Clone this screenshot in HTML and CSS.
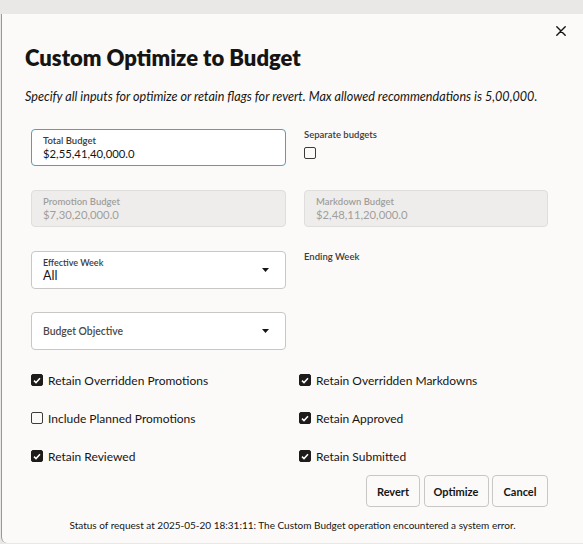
FILE: index.html
```html
<!DOCTYPE html>
<html lang="en">
<head>
<meta charset="utf-8">
<title>Custom Optimize to Budget</title>
<link rel="stylesheet" href="styles.css">
</head>
<body>
<div class="dialog">
  <div class="dlg-head">
    <button class="close" aria-label="Close">
      <svg width="10" height="10" viewBox="0 0 10 10"><path d="M0.8 0.8L9.2 9.2M9.2 0.8L0.8 9.2" stroke="#161513" stroke-width="1.4" stroke-linecap="round"/></svg>
    </button>
  </div>
  <h1 class="title">Custom Optimize to Budget</h1>
  <p class="subtitle">Specify all inputs for optimize or retain flags for revert. Max allowed recommendations is 5,00,000.</p>

  <div class="form">
    <div class="row">
      <div class="field focused">
        <span class="flabel">Total Budget</span>
        <span class="fvalue">$2,55,41,40,000.0</span>
      </div>
      <div class="side">
        <span class="slabel">Separate budgets</span>
        <span class="cb"></span>
      </div>
    </div>

    <div class="row">
      <div class="field disabled">
        <span class="flabel">Promotion Budget</span>
        <span class="fvalue">$7,30,20,000.0</span>
      </div>
      <div class="field disabled">
        <span class="flabel">Markdown Budget</span>
        <span class="fvalue">$2,48,11,20,000.0</span>
      </div>
    </div>

    <div class="row row-tight">
      <div class="field select">
        <div class="ftext">
          <span class="flabel small">Effective Week</span>
          <span class="fvalue big">All</span>
        </div>
        <svg class="caret" width="7" height="4" viewBox="0 0 7 4"><path d="M0 0H7L3.5 4Z" fill="#161513"/></svg>
      </div>
      <div class="side">
        <span class="slabel">Ending Week</span>
      </div>
    </div>

    <div class="row">
      <div class="field select">
        <span class="placeholder">Budget Objective</span>
        <svg class="caret" width="7" height="4" viewBox="0 0 7 4"><path d="M0 0H7L3.5 4Z" fill="#161513"/></svg>
      </div>
    </div>

    <div class="checks">
      <label class="check"><span class="cb on"><svg width="8" height="7" viewBox="0 0 8 7"><path d="M1 3.6L3 5.6L7 1.2" stroke="#fff" stroke-width="1.5" fill="none"/></svg></span>Retain Overridden Promotions</label>
      <label class="check"><span class="cb on"><svg width="8" height="7" viewBox="0 0 8 7"><path d="M1 3.6L3 5.6L7 1.2" stroke="#fff" stroke-width="1.5" fill="none"/></svg></span>Retain Overridden Markdowns</label>
      <label class="check"><span class="cb"></span>Include Planned Promotions</label>
      <label class="check"><span class="cb on"><svg width="8" height="7" viewBox="0 0 8 7"><path d="M1 3.6L3 5.6L7 1.2" stroke="#fff" stroke-width="1.5" fill="none"/></svg></span>Retain Approved</label>
      <label class="check"><span class="cb on"><svg width="8" height="7" viewBox="0 0 8 7"><path d="M1 3.6L3 5.6L7 1.2" stroke="#fff" stroke-width="1.5" fill="none"/></svg></span>Retain Reviewed</label>
      <label class="check"><span class="cb on"><svg width="8" height="7" viewBox="0 0 8 7"><path d="M1 3.6L3 5.6L7 1.2" stroke="#fff" stroke-width="1.5" fill="none"/></svg></span>Retain Submitted</label>
    </div>

    <div class="buttons">
      <button class="btn btn-revert">Revert</button>
      <button class="btn btn-opt">Optimize</button>
      <button class="btn btn-cancel">Cancel</button>
    </div>
  </div>
  <p class="status">Status of request at 2025-05-20 18:31:11: The Custom Budget operation encountered a system error.</p>
</div>
</body>
</html>
```

FILE: styles.css
```css
* { box-sizing: border-box; }

html, body {
  margin: 0;
  height: 544px;
  overflow: hidden;
}

body {
  background: #e9e8e6;
  font-family: Lato, "Noto Sans", "Liberation Sans", sans-serif;
  color: #161513;
}

.dialog {
  margin: 14px 0 0 1px;
  height: 529px;
  background: #fcfaf9;
  border-left: 1px solid #9b9997;
  border-radius: 0 0 0 6px;
  padding: 0 0 0 23px;
  display: flex;
  flex-direction: column;
}

.dlg-head {
  display: flex;
  justify-content: flex-end;
  padding: 12px 17px 0 0;
  height: 22px;
}

.close {
  border: 0;
  background: none;
  padding: 0;
  width: 10px;
  height: 10px;
  display: block;
}
.close svg { display: block; }

.title {
  margin: 8px 0 0;
  font-size: 22px;
  line-height: 27px;
  font-weight: 800;
}

.subtitle {
  margin: 18px 0 0;
  font-size: 12.6px;
  line-height: 16px;
  font-style: italic;
}

.form {
  margin: 24px 0 0 6px;
  width: 517px;
  display: flex;
  flex-direction: column;
}

.row {
  display: grid;
  grid-template-columns: 255px 244px;
  column-gap: 18px;
  margin-bottom: 24px;
  align-items: start;
}
.row.row-tight { margin-bottom: 23px; }

.field {
  height: 37px;
  border: 1px solid #c9c7c5;
  border-radius: 4px;
  background: #fff;
  padding: 5px 11px 0;
  display: flex;
  flex-direction: column;
}

.field.focused {
  border: 1.5px solid #5f9cb0;
  padding-top: 4.5px;
}

.field.disabled {
  background: #efedeb;
  border-color: #e0dedc;
}

.flabel {
  font-size: 9.5px;
  line-height: 12px;
  font-weight: 600;
  color: #3c3b39;
}
.flabel.small { font-size: 9px; }

.fvalue {
  font-size: 11.3px;
  line-height: 14px;
  color: #161513;
}
.fvalue.big { font-size: 12.5px; }

.disabled .flabel,
.disabled .fvalue { color: #a09e9c; }

.field.select {
  height: 38px;
  flex-direction: row;
  align-items: center;
  justify-content: space-between;
  padding: 0 16px 0 11px;
}

.ftext {
  display: flex;
  flex-direction: column;
  padding-bottom: 1px;
}

.caret { display: block; flex: none; }

.placeholder {
  font-size: 10.4px;
  font-weight: 600;
  color: #4b4a48;
}

.side {
  display: flex;
  flex-direction: column;
}

.slabel {
  font-size: 9.5px;
  line-height: 12px;
  font-weight: 600;
  color: #3c3b39;
  margin-bottom: 6px;
}

.cb {
  width: 12px;
  height: 12px;
  border: 1.5px solid #3c3b39;
  border-radius: 2px;
  display: flex;
  align-items: center;
  justify-content: center;
  flex: none;
}

.cb.on {
  background: #1d1c1b;
  border-color: #1d1c1b;
}
.cb svg { display: block; }

.checks {
  margin-top: -13px;
  display: grid;
  grid-template-columns: 268px 249px;
  grid-auto-rows: 38px;
}

.check {
  display: flex;
  align-items: center;
  gap: 5px;
  font-size: 12px;
  color: #161513;
}

.buttons {
  display: flex;
  justify-content: flex-end;
  gap: 3.5px;
}

.btn {
  height: 32px;
  border: 1px solid #c9c7c5;
  border-radius: 4px;
  background: #fcfaf9;
  font-family: inherit;
  font-size: 11px;
  font-weight: 700;
  color: #161513;
  padding: 0;
}
.btn-revert { width: 54px; }
.btn-opt { width: 65px; }
.btn-cancel { width: 56px; }

.status {
  margin: 11px 0 0 9px;
  width: 517px;
  text-align: center;
  white-space: nowrap;
  font-size: 10px;
  line-height: 14px;
  color: #161513;
}
```
